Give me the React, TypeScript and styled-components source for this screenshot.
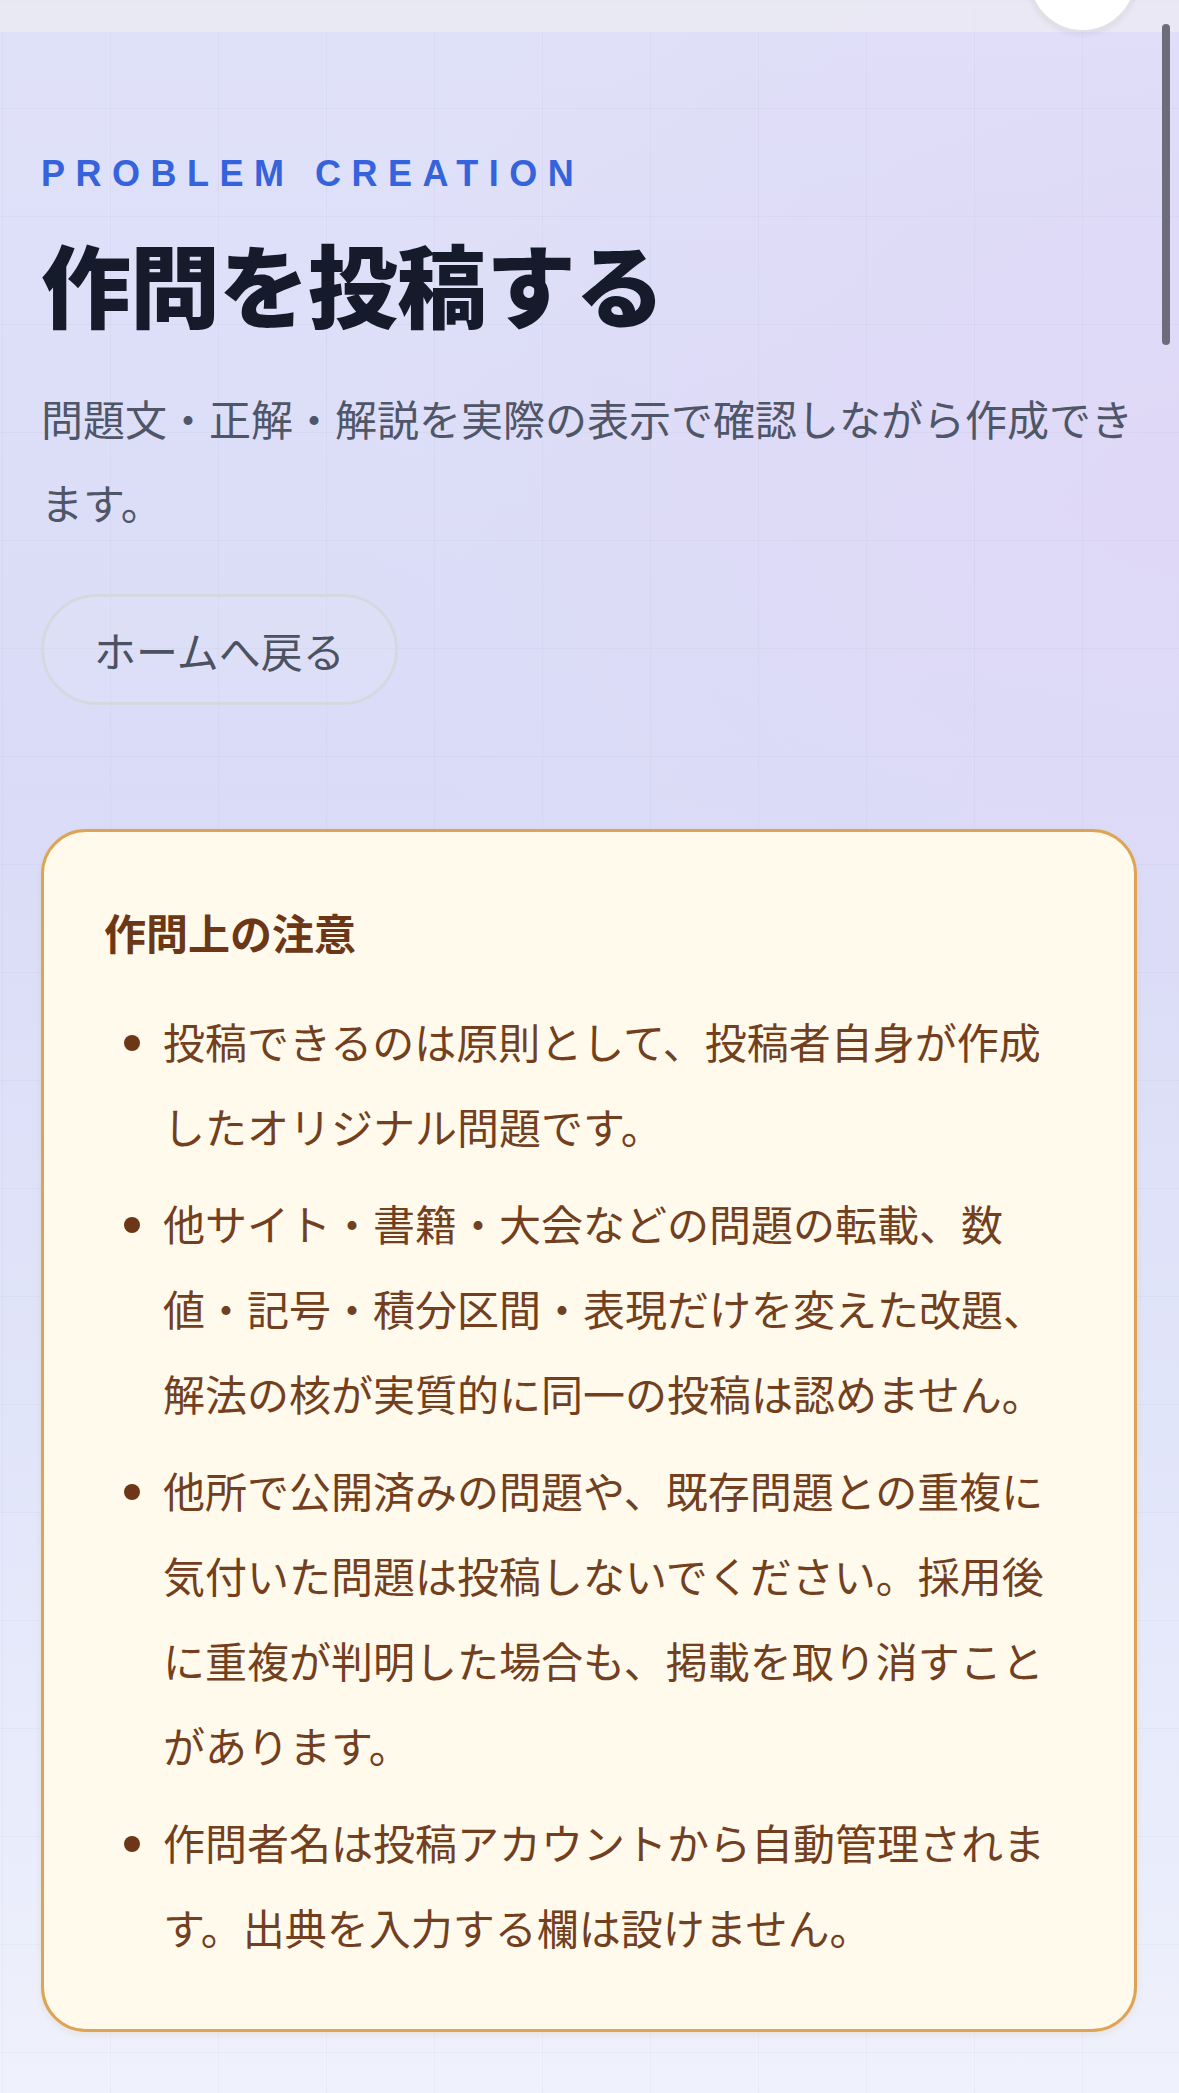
import React from 'react';
import styled, { createGlobalStyle } from 'styled-components';

const GlobalStyle = createGlobalStyle`
  html, body {
    margin: 0;
    padding: 0;
  }
  body {
    font-family: "Noto Sans CJK JP", "Noto Sans", sans-serif;
    -webkit-font-smoothing: antialiased;
  }
  * {
    box-sizing: border-box;
  }
`;

const Page = styled.div`
  position: relative;
  min-height: 2093px;
  overflow: hidden;
  background-color: #e3e5f9;
  background-image:
    linear-gradient(rgba(90, 90, 150, 0.045) 1px, transparent 1px),
    linear-gradient(90deg, rgba(90, 90, 150, 0.045) 1px, transparent 1px),
    radial-gradient(ellipse 70% 35% at 100% 22%, rgba(224, 214, 246, 0.7), rgba(224, 214, 246, 0) 100%),
    linear-gradient(180deg, #e0e1f9 0%, #dadcf7 38%, #e1e5f9 68%, #eff1fc 100%);
  background-size: 108px 108px, 108px 108px, 100% 100%, 100% 100%;
  background-position: 0 0, 2px 0, 0 0, 0 0;
`;

const Header = styled.header`
  height: 32px;
  display: flex;
  justify-content: flex-end;
  align-items: flex-end;
  padding-right: 42px;
  background: rgba(236, 236, 242, 0.7);
`;

const MenuButton = styled.button`
  flex-shrink: 0;
  width: 109px;
  height: 109px;
  border-radius: 50%;
  border: 2px solid #e2e2e6;
  background: #ffffff;
  box-shadow: 0 2px 6px rgba(40, 40, 70, 0.08);
  padding: 0;
`;

const ScrollThumb = styled.div`
  position: fixed;
  top: 24px;
  right: 9px;
  width: 8px;
  height: 321px;
  border-radius: 4px;
  background: #6d6c7a;
`;

const Main = styled.main`
  padding: 120px 42px 60px 41px;
  display: flex;
  flex-direction: column;
  align-items: flex-start;
`;

const Eyebrow = styled.p`
  margin: 0;
  font-family: "Liberation Sans", Arial, sans-serif;
  font-weight: 700;
  font-size: 36px;
  line-height: 44px;
  letter-spacing: 10.5px;
  color: #3563db;
`;

const Title = styled.h1`
  margin: 32px 0 0;
  font-size: 90px;
  line-height: 108px;
  font-weight: 800;
  letter-spacing: -1px;
  color: #151b2b;
`;

const Lead = styled.p`
  margin: 40px 0 0;
  width: 100%;
  font-size: 42px;
  line-height: 84px;
  color: #4f5668;
`;

const BackButton = styled.button`
  margin-top: 50px;
  height: 111px;
  padding: 0 50px;
  border: 3px solid #d6d8e0;
  border-radius: 999px;
  background: rgba(255, 255, 255, 0.06);
  font-family: "Noto Sans CJK JP", sans-serif;
  font-size: 42px;
  line-height: 63px;
  color: #4b5262;
`;

const Notice = styled.section`
  margin-top: 124px;
  width: 100%;
  padding: 60px;
  border: 3px solid #dea455;
  border-radius: 45px;
  background: #fffaec;
  box-shadow: 0 3px 6px rgba(180, 130, 60, 0.12);
`;

const NoticeTitle = styled.h2`
  margin: 0 0 26px;
  font-size: 42px;
  line-height: 80px;
  font-weight: 700;
  color: #6c3716;
`;

const NoticeList = styled.ul`
  margin: 0;
  padding-left: 59px;
  list-style: disc;
  color: #72401e;
`;

const NoticeItem = styled.li`
  font-size: 42px;
  line-height: 85px;
  & + & {
    margin-top: 12px;
  }
  &::marker {
    color: #6c3716;
  }
`;

const rules: React.ReactNode[] = [
  '投稿できるのは原則として、投稿者自身が作成したオリジナル問題です。',
  <>
    他サイト・書籍・大会などの問題の転載、数<br/>値・記号・積分区間・表現だけを変えた改題、解法の核が実質的に同一の投稿は認めません。
  </>,
  '他所で公開済みの問題や、既存問題との重複に気付いた問題は投稿しないでください。採用後に重複が判明した場合も、掲載を取り消すことがあります。',
  '作問者名は投稿アカウントから自動管理されます。出典を入力する欄は設けません。',
];

const App = () => {
  return (
    <Page>
      <GlobalStyle/>
      <Header>
        <MenuButton aria-label="menu"/>
      </Header>
      <ScrollThumb/>
      <Main>
        <Eyebrow>PROBLEM CREATION</Eyebrow>
        <Title>作問を投稿する</Title>
        <Lead>問題文・正解・解説を実際の表示で確認しながら作成できます。</Lead>
        <BackButton>ホームへ戻る</BackButton>
        <Notice>
          <NoticeTitle>作問上の注意</NoticeTitle>
          <NoticeList>
            {rules.map((rule, index) => (
              <NoticeItem key={index}>{rule}</NoticeItem>
            ))}
          </NoticeList>
        </Notice>
      </Main>
    </Page>
  );
};

export default App;
